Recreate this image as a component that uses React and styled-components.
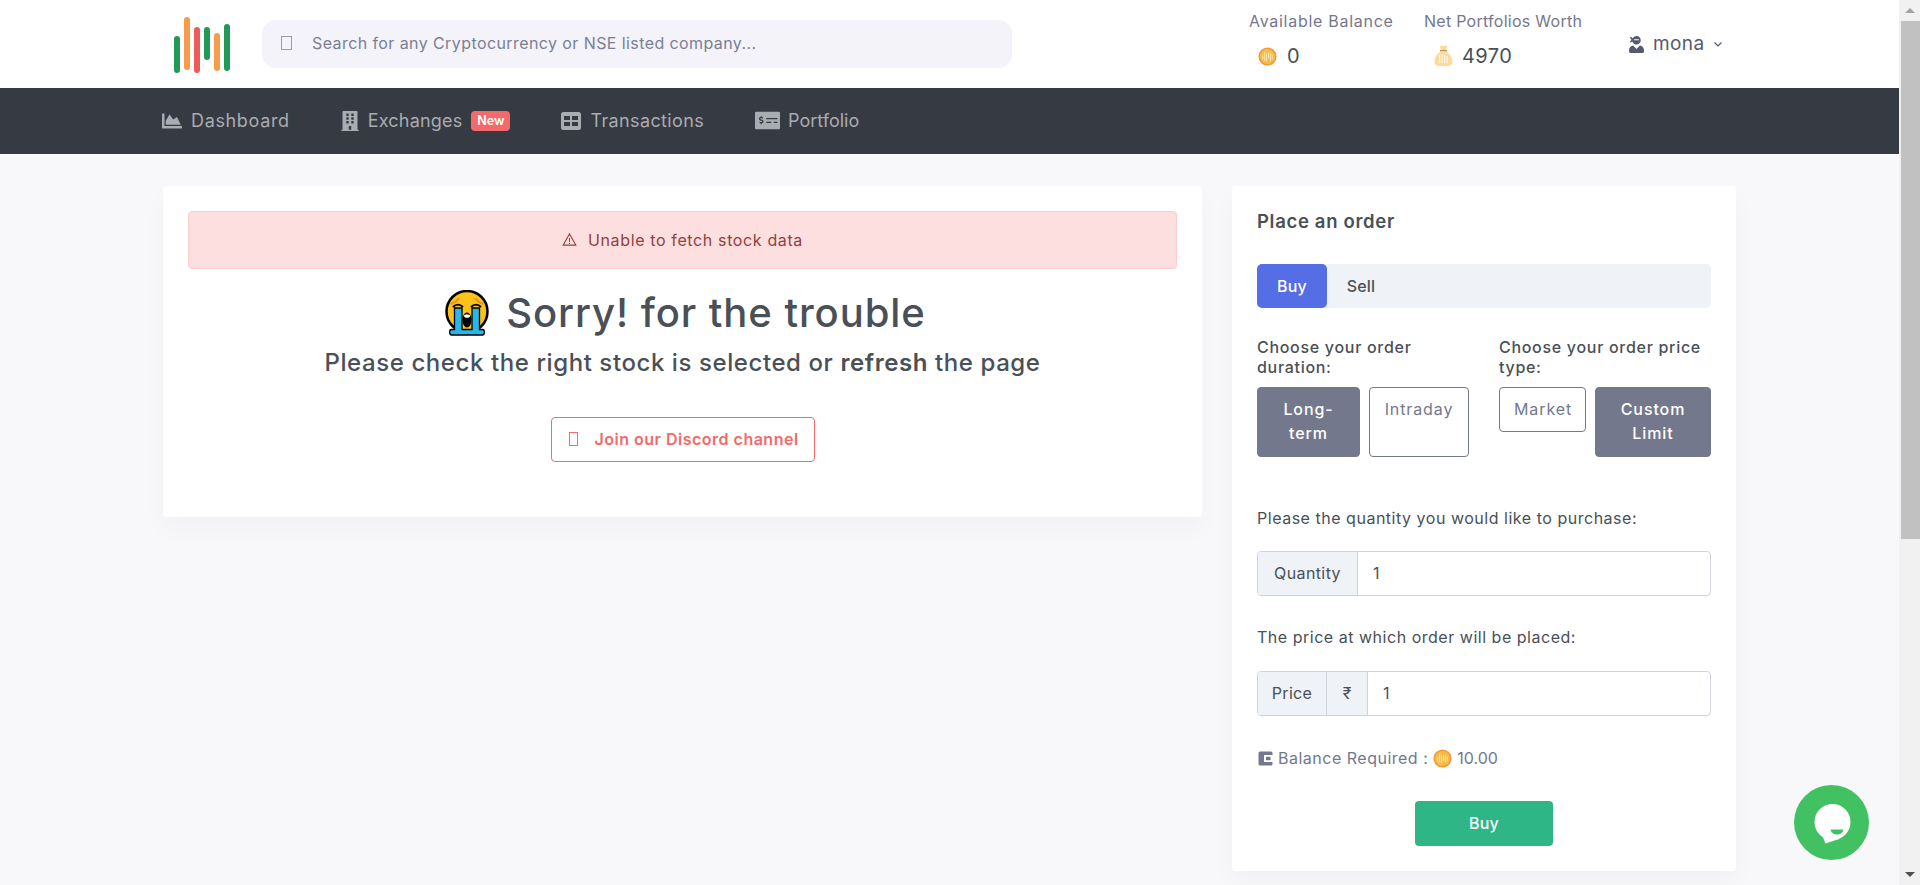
import React from "react";
import styled, { createGlobalStyle } from "styled-components";
import { FaChartArea, FaBuilding, FaMoneyCheckAlt, FaUserNinja } from "react-icons/fa";

const Global = createGlobalStyle`
  html, body { margin: 0; padding: 0; background: #f8f8fb; }
  body { font-family: Inter, "Noto Sans", "Liberation Sans", sans-serif; color: #495057; font-size: 16px; }
  * { box-sizing: border-box; }
`;

const Page = styled.div`min-height: 1448px; display: flex; flex-direction: column;`;
const TopBar = styled.header`height: 88px; background: #fff; display: flex; align-items: center; padding: 0 0 0 172px; flex: none;`;
const Logo = styled.svg`width: 60px; height: 88px; flex: none; margin-right: 30px;`;
const Search = styled.div`width: 750px; height: 48px; background: #f3f3f9; border-radius: 14px; display: flex; align-items: center; padding: 0 0 2px 19px; color: #7c7f93; font-size: 16px; letter-spacing: .41px;`;
const Tofu = styled.span`
  display: inline-block; width: ${p => p.$w || 11}px; height: ${p => p.$h || 14}px; border: 1px solid ${p => p.$c || "#9a9cae"}; flex: none;
`;
const SearchText = styled.span`margin-left: 20px;`;
const Stats = styled.div`display: flex; margin-left: 237px; height: 88px;`;
const Stat = styled.div`display: flex; flex-direction: column; width: ${p => p.$w}px; padding-top: 11px;`;
const StatLabel = styled.div`font-size: 16px; line-height: 20px; color: #74788d; letter-spacing: ${p => p.$ls}; white-space: nowrap;`;
const StatValue = styled.div`display: flex; align-items: center; gap: ${p => p.$gap || 10}px; margin: 4px 0 0 ${p => p.$ml}px; font-size: 20px; line-height: 42px; height: 42px; color: #495057; letter-spacing: .4px;`;
const User = styled.div`display: flex; align-items: center; height: 88px; margin-left: 46px; color: #555b6d; font-size: 19px; letter-spacing: .4px;`;
const UserName = styled.span`margin-left: 8px; padding-bottom: 2px;`;
const Chevron = styled.svg`width: 10px; height: 10px; margin-left: 8px;`;

const NavBar = styled.nav`height: 66px; background: #363a42; display: flex; align-items: center; padding-left: 161px; flex: none;`;
const NavItem = styled.a`display: flex; align-items: center; color: #a9acb1; font-size: 18px; margin-right: ${p => p.$mr}px; letter-spacing: ${p => p.$ls}; padding-bottom: 1px;`;
const NavIcon = styled.span`display: flex; width: ${p => p.$w}px; margin-right: ${p => p.$gap}px; font-size: ${p => p.$size}px; justify-content: center;`;
const NewBadge = styled.span`margin-left: 9px; width: 39px; height: 20px; background: #f46a6a; border-radius: 4px; color: #fff; font-size: 12.5px; font-weight: 600; display: flex; align-items: center; justify-content: center; letter-spacing: 0;`;

const Main = styled.main`display: flex; align-items: flex-start; padding: 32px 0 0 163px; gap: 30px;`;
const Card = styled.section`background: #fff; border-radius: 4px; box-shadow: 0 12px 24px rgba(18,38,63,.03);`;
const LeftCard = styled(Card)`width: 1039px; height: 331px; padding: 25px; text-align: center;`;
const Alert = styled.div`height: 58px; background: #fddfdf; border: 1px solid #fccfcf; border-radius: 4px; color: #924040; display: flex; align-items: center; justify-content: center; font-size: 16px; letter-spacing: .63px; padding-bottom: 1px;`;
const AlertIcon = styled.svg`width: 15px; height: 15px; margin-right: 11px;`;
const Title = styled.h1`margin: 21px 0 0; padding-left: 5px; font-size: 40px; font-weight: 500; line-height: 46px; color: #495057; display: flex; align-items: center; justify-content: center; letter-spacing: .93px;`;
const Emoji = styled.svg`width: 46px; height: 46px; margin-right: 16px;`;
const Sub = styled.h3`margin: 10px 0 0; font-size: 24px; line-height: 33px; font-weight: 500; color: #495057; letter-spacing: .58px;`;
const Strong = styled.b`font-weight: 600;`;
const Discord = styled.a`display: inline-flex; align-items: center; width: 264px; height: 45px; margin: 38px 0 0; padding: 0 0 2px 17px; border: 1px solid #f46a6a; border-radius: 4px; color: #f46a6a; font-weight: 600; font-size: 16px; letter-spacing: .5px;`;
const DiscordText = styled.span`margin-left: 17px;`;

const RightCard = styled(Card)`width: 504px; height: 685px; padding: 25px;`;
const OrderTitle = styled.h4`margin: 0; font-size: 18.5px; line-height: 21px; padding-bottom: 1px; font-weight: 600; color: #495057; letter-spacing: .68px;`;
const Tabs = styled.div`display: flex; height: 44px; margin-top: 31px; background: #eff2f7; border-radius: 5px; font-size: 16px; font-weight: 500; letter-spacing: .2px;`;
const Tab = styled.div`display: flex; align-items: center; justify-content: center; width: ${p => p.$active ? 70 : 68}px; border-radius: 5px; background: ${p => p.$active ? "#556ee6" : "transparent"}; color: ${p => p.$active ? "#fff" : "#495057"};`;
const Choices = styled.div`display: grid; grid-template-columns: 212px 212px; column-gap: 30px; margin-top: 29px;`;
const ChoiceColumn = styled.div`display: flex; flex-direction: column;`;
const ChoiceLabel = styled.div`font-size: 16px; line-height: 20px; font-weight: 500; color: #495057; letter-spacing: .7px;`;
const ChoiceRow = styled.div`display: flex; align-items: flex-start; gap: 9px; margin-top: 10px;`;
const Choice = styled.div`
  width: ${p => p.$w}px; height: ${p => p.$short ? "45px" : "70px"}; padding: 9px 14px; font-size: 16px; line-height: 24px; letter-spacing: .9px;
  border: 1px solid #74788d; border-radius: 4px; text-align: center; 
  background: ${p => p.$on ? "#74788d" : "#fff"}; color: ${p => p.$on ? "#fff" : "#74788d"}; font-weight: ${p => p.$on ? 500 : 400};
`;
const FormLabel = styled.div`font-size: 16px; line-height: 22px; color: #495057; margin-top: ${p => p.$mt}px; letter-spacing: .52px;`;
const Group = styled.div`display: flex; height: 45px; margin-top: ${p => p.$mt}px; border: 1px solid #ced4da; border-radius: 4px; overflow: hidden; font-size: 16px;`;
const Addon = styled.div`display: flex; align-items: center; justify-content: center; width: ${p => p.$w}px; background: #eff2f7; border-right: 1px solid #ced4da; color: #495057; flex: none; letter-spacing: ${p => p.$ls || 0}; padding-bottom: 2px;`;
const Value = styled.div`display: flex; align-items: center; padding: 0 0 2px 15px; color: #495057; flex: 1;`;
const Required = styled.div`display: flex; align-items: center; margin-top: 31px; height: 22px; color: #74788d; font-size: 16px; letter-spacing: .5px;`;
const RequiredAmount = styled.span`letter-spacing: 0;`;
const WalletIcon = styled.svg`width: 15px; height: 15px; margin-left: 1px; margin-right: 5px;`;
const ReqCoin = styled.span`display: flex; margin: 0 5px;`;
const BuyRow = styled.div`display: flex; justify-content: center; margin-top: 32px;`;
const BuyBtn = styled.button`width: 138px; height: 45px; padding: 0 0 2px; background: #2fb686; border: 0; border-radius: 4px; color: #fff; font: inherit; font-weight: 500; font-size: 16px; letter-spacing: .3px;`;
const ChatBubble = styled.div`position: fixed; left: 1794px; top: 785px; width: 75px; height: 75px; border-radius: 50%; background: #42c163; display: flex; align-items: center; justify-content: center;`;

const ScrollTrack = styled.div`position: fixed; top: 0; right: 0; bottom: 0; width: 21px; background: #f1f1f1; display: flex; flex-direction: column; justify-content: space-between;`;
const ScrollUpper = styled.div`display: flex; flex-direction: column;`;
const ArrowBox = styled.div`height: 21px; display: flex; align-items: center; justify-content: center;`;
const ArrowUp = styled.span`width: 0; height: 0; border-left: 5px solid transparent; border-right: 5px solid transparent; border-bottom: 5px solid #a3a3a3;`;
const ArrowDown = styled.span`width: 0; height: 0; border-left: 5px solid transparent; border-right: 5px solid transparent; border-top: 5px solid #505050;`;
const ScrollThumb = styled.div`height: 518px; margin-left: 2px; background: #c1c1c1;`;

const Coin = ({ s = 19 }) => (
  <svg width={s} height={s} viewBox="0 0 20 20">
    <circle cx="10" cy="10" r="9.500" fill="#f2993a" />
    <circle cx="10" cy="10" r="8" fill="#f6bc4a" />
    <g fill="#fde9b0">
      <rect x="4.500" y="8" width="1" height="5" /><rect x="6.500" y="5.500" width="1" height="9" /><rect x="8.500" y="7" width="1" height="8" />
      <rect x="10.500" y="5.500" width="1" height="7" /><rect x="12.500" y="6.500" width="1" height="8" /><rect x="14.500" y="8" width="1" height="5" />
    </g>
  </svg>
);
const Bag = () => (
  <svg width="19" height="22" viewBox="0 0 19 22">
    <path d="M5.500 1h8l-1.900 5c3 2 6.900 6 6.900 10.500 0 3.500-2.500 4.500-4 4.500H4.500c-1.500 0-4-1-4-4.500C.5 12 4.400 8 7.400 6z" fill="#fddb9c" />
    <rect x="6" y="5" width="7" height="1.200" fill="#c98a5a" />
    <g fill="#fff6e2">
      <rect x="5" y="10" width="1.200" height="8" /><rect x="7.500" y="9" width="1.200" height="9" /><rect x="10" y="10" width="1.200" height="8" /><rect x="12.500" y="11" width="1.200" height="7" />
    </g>
  </svg>
);

export default function App() {
  return (
    <Page>
      <Global />
      <TopBar>
        <Logo viewBox="0 0 60 88">
          <g strokeWidth="6" strokeLinecap="round">
            <path d="M5 39v31" stroke="#219a58" />
            <path d="M15 20v47" stroke="#f79c4c" />
            <path d="M25 30v40" stroke="#ef5a5a" />
            <path d="M35 30v27" stroke="#219a58" />
            <path d="M45 36v32" stroke="#f79c4c" />
            <path d="M55 27v41" stroke="#219a58" />
          </g>
        </Logo>
        <Search>
          <Tofu />
          <SearchText>Search for any Cryptocurrency or NSE listed company...</SearchText>
        </Search>
        <Stats>
          <Stat $w={175}>
            <StatLabel $ls=".72px">Available Balance</StatLabel>
            <StatValue $ml={9}><Coin />0</StatValue>
          </Stat>
          <Stat $w={158}>
            <StatLabel $ls=".27px">Net Portfolios Worth</StatLabel>
            <StatValue $ml={10} $gap={9}><Bag />4970</StatValue>
          </Stat>
        </Stats>
        <User>
          <FaUserNinja size={17} />
          <UserName>mona</UserName>
          <Chevron viewBox="0 0 10 10"><path d="M1.500 3.500 5 7l3.500-3.500" fill="none" stroke="#555b6d" strokeWidth="1.200" /></Chevron>
        </User>
      </TopBar>
      <NavBar>
        <NavItem $mr={51} $ls=".65px"><NavIcon $w={21} $gap={9} $size={20}><FaChartArea /></NavIcon>Dashboard</NavItem>
        <NavItem $mr={51} $ls=".2px"><NavIcon $w={18} $gap={9} $size={20}><FaBuilding /></NavIcon>Exchanges<NewBadge>New</NewBadge></NavItem>
        <NavItem $mr={51} $ls=".37px">
          <NavIcon $w={20} $gap={9} $size={20}>
            <svg width="20" height="18" viewBox="0 0 20 18"><path fillRule="evenodd" fill="#a9acb1" d="M2.500 0h15A2.500 2.500 0 0 1 20 2.500v13a2.500 2.500 0 0 1-2.500 2.500h-15A2.500 2.500 0 0 1 0 15.500v-13A2.500 2.500 0 0 1 2.500 0zM3 4v4h6V4zm8 0v4h6V4zM3 10v4h6v-4zm8 0v4h6v-4z" /></svg>
          </NavIcon>Transactions
        </NavItem>
        <NavItem $mr={0} $ls="0"><NavIcon $w={25} $gap={8} $size={25}><FaMoneyCheckAlt /></NavIcon>Portfolio</NavItem>
      </NavBar>
      <Main>
        <LeftCard>
          <Alert>
            <AlertIcon viewBox="0 0 16 16"><path d="M8 2 1.200 14h13.600zM8 6.500v4M8 11.500v1.200" fill="none" stroke="#924040" strokeWidth="1.100" /></AlertIcon>
            Unable to fetch stock data
          </Alert>
          <Title>
            <Emoji viewBox="0 0 46 46" role="img" aria-label="😭">
              <circle cx="23" cy="21.500" r="20.500" fill="#fcc21b" stroke="#000" strokeWidth="2.500" />
              <path d="M7 14c3-1 6-3 8-6M39 14c-3-1-6-3-8-6" fill="none" stroke="#e59a1c" strokeWidth="2" />
              <ellipse cx="23" cy="30" rx="4.500" ry="7.500" fill="#000" />
              <ellipse cx="23" cy="26" rx="3" ry="1.800" fill="#fff" />
              <path d="M10.500 18h7.500v21.500h10V18h7.500v21.500h3c2.500 0 2.500 5.500 0 5.500H7.500c-2.500 0-2.500-5.500 0-5.500h3z" fill="#29b6e8" stroke="#000" strokeWidth="1.300" />
              <path d="M9 17c3-3 7-3 10 0M27 17c3-3 7-3 10 0" fill="none" stroke="#000" strokeWidth="2" />
            </Emoji>
            Sorry! for the trouble
          </Title>
          <Sub>Please check the right stock is selected or <Strong>refresh</Strong> the page</Sub>
          <Discord><Tofu $c="#f46a6a" $w={9} $h={14} /><DiscordText>Join our Discord channel</DiscordText></Discord>
        </LeftCard>
        <RightCard>
          <OrderTitle>Place an order</OrderTitle>
          <Tabs><Tab $active>Buy</Tab><Tab>Sell</Tab></Tabs>
          <Choices>
            <ChoiceColumn>
              <ChoiceLabel>Choose your order duration:</ChoiceLabel>
              <ChoiceRow>
                <Choice $on $w={103}>Long-term</Choice>
                <Choice $w={100}>Intraday</Choice>
              </ChoiceRow>
            </ChoiceColumn>
            <ChoiceColumn>
              <ChoiceLabel>Choose your order price type:</ChoiceLabel>
              <ChoiceRow>
                <Choice $short $w={87}>Market</Choice>
                <Choice $on $w={116}>Custom Limit</Choice>
              </ChoiceRow>
            </ChoiceColumn>
          </Choices>
          <FormLabel $mt={50}>Please the quantity you would like to purchase:</FormLabel>
          <Group $mt={22}><Addon $w={100} $ls=".4px">Quantity</Addon><Value>1</Value></Group>
          <FormLabel $mt={30}>The price at which order will be placed:</FormLabel>
          <Group $mt={23}><Addon $w={69} $ls=".3px">Price</Addon><Addon $w={41}>₹</Addon><Value>1</Value></Group>
          <Required>
            <WalletIcon viewBox="0 0 15 15">
              <rect x="0.500" y="0.500" width="14" height="14" rx="1.500" fill="#74788d" />
              <rect x="6" y="4" width="9" height="7" fill="#fff" />
              <rect x="8" y="5.800" width="4.500" height="3.400" fill="#74788d" />
            </WalletIcon>
            Balance Required :<ReqCoin><Coin /></ReqCoin><RequiredAmount>10.00</RequiredAmount>
          </Required>
          <BuyRow><BuyBtn>Buy</BuyBtn></BuyRow>
        </RightCard>
      </Main>
      <ChatBubble>
        <svg width="38" height="42" viewBox="0 0 38 42">
          <circle cx="19.500" cy="20" r="18" fill="#fff" />
          <path d="M9 33l3.500 8.500L26 37z" fill="#fff" />
          <path d="M17.500 27.500h13c-1 4-4 5-6.500 5s-5.500-1-6.500-5z" fill="#42c163" />
        </svg>
      </ChatBubble>
      <ScrollTrack>
        <ScrollUpper>
          <ArrowBox><ArrowUp /></ArrowBox>
          <ScrollThumb />
        </ScrollUpper>
        <ArrowBox><ArrowDown /></ArrowBox>
      </ScrollTrack>
    </Page>
  );
}
